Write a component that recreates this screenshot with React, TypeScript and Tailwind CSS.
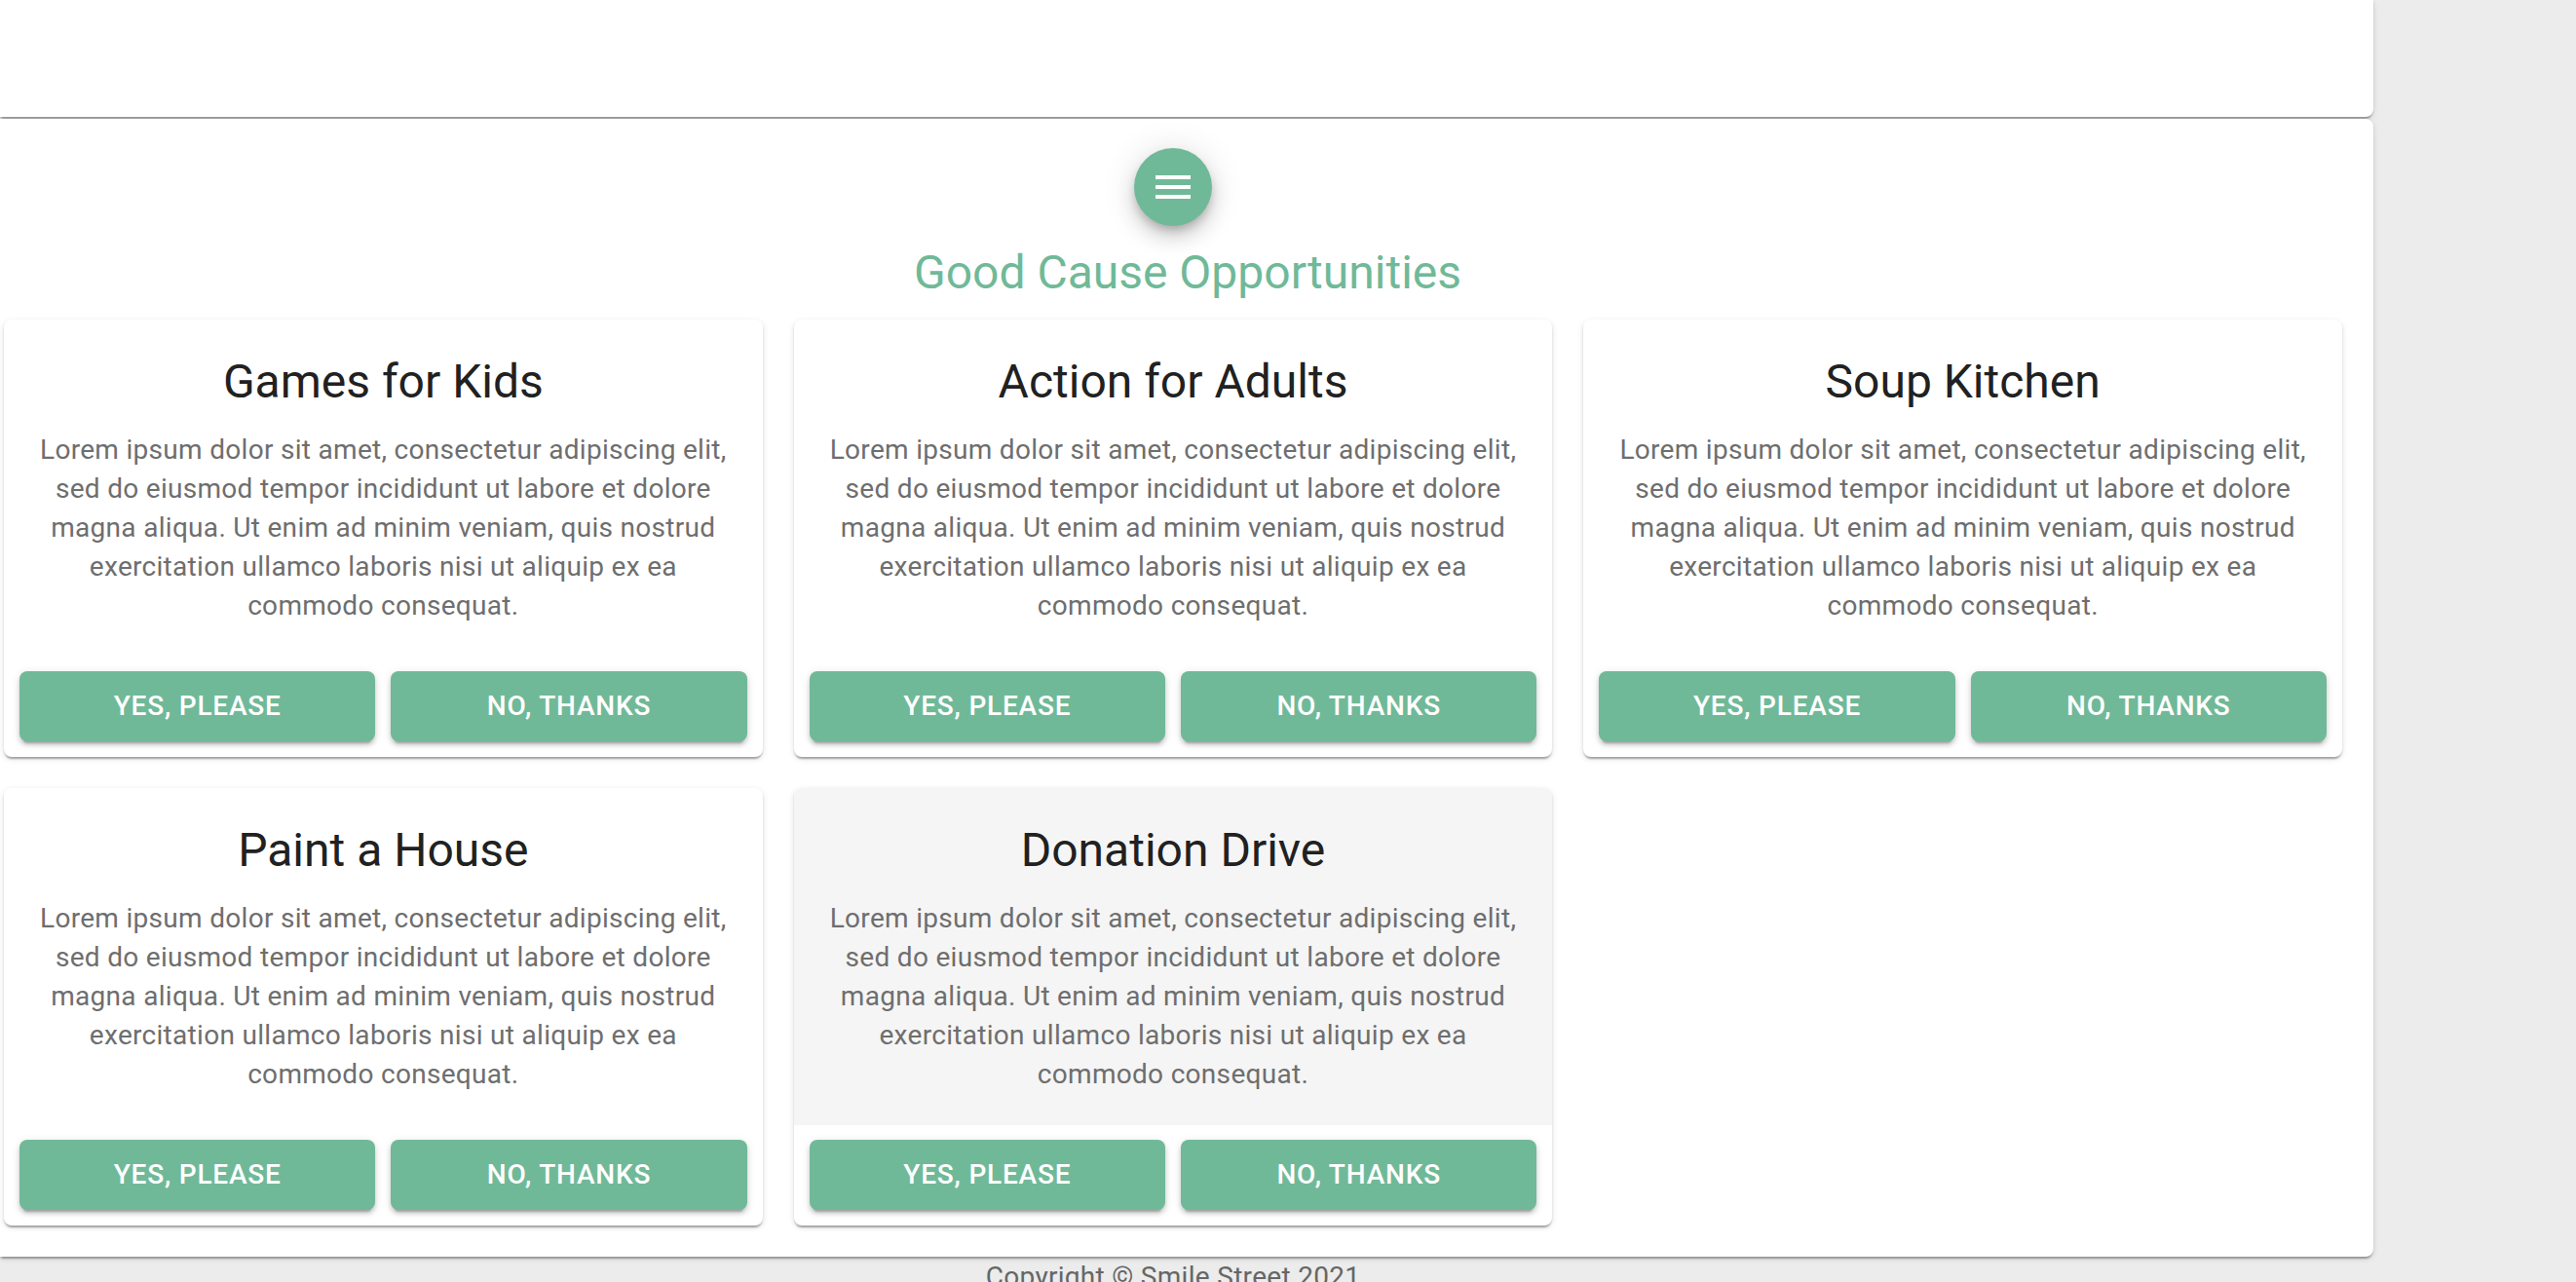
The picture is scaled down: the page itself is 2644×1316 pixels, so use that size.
const causes = [
  { title: "Games for Kids" },
  { title: "Action for Adults" },
  { title: "Soup Kitchen" },
  { title: "Paint a House" },
  { title: "Donation Drive", hovered: true },
];

const lorem =
  "Lorem ipsum dolor sit amet, consectetur adipiscing elit, sed do eiusmod tempor incididunt ut labore et dolore magna aliqua. Ut enim ad minim veniam, quis nostrud exercitation ullamco laboris nisi ut aliquip ex ea commodo consequat.";

const paperShadow =
  "shadow-[0_4px_2px_-2px_rgba(0,0,0,0.2),0_2px_2px_0_rgba(0,0,0,0.14),0_2px_6px_0_rgba(0,0,0,0.12)]";

const MenuIcon = () => (
  <svg viewBox="0 0 24 24" className="h-[48px] w-[48px] fill-white">
    <path d="M3 18h18v-2H3v2zm0-5h18v-2H3v2zm0-7v2h18V6H3z" />
  </svg>
);

const ActionButton = ({ label }: { label: string }) => (
  <button className="h-[72px] flex-1 rounded-[8px] bg-[#70b998] text-[28px] font-medium uppercase tracking-[0.8px] text-white shadow-[0_6px_2px_-4px_rgba(0,0,0,0.2),0_4px_4px_0_rgba(0,0,0,0.14),0_2px_10px_0_rgba(0,0,0,0.12)]">
    {label}
  </button>
);

const CauseCard = ({ title, hovered }: { title: string; hovered?: boolean }) => (
  <div className={`flex flex-col overflow-hidden rounded-[8px] bg-white ${paperShadow}`}>
    <div className={`px-[32px] pb-[32px] pt-[32px] text-center ${hovered ? "bg-[#f5f5f5]" : ""}`}>
      <h3 className="mb-[17px] text-[48px] leading-[64px] text-[#212121]">{title}</h3>
      <p className="pt-[1px] text-[28px] leading-[40px] tracking-[0.3px] text-[#6e6e6e]">{lorem}</p>
    </div>
    <div className="flex gap-[16px] p-[16px] pt-[15px]">
      <ActionButton label="Yes, please" />
      <ActionButton label="No, thanks" />
    </div>
  </div>
);

export default function App() {
  return (
    <div className="h-[1316px] w-full overflow-hidden bg-[#ebeceb] font-['Roboto',sans-serif]">
      <div className={`h-[120px] w-[2436px] rounded-br-[8px] bg-white ${paperShadow}`} />

      <main className={`mt-[2px] w-[2436px] rounded-r-[8px] bg-white pb-[32px] pl-[4px] pr-[32px] ${paperShadow}`}>
        <div className="flex justify-center pt-[30px]">
          <button className="flex h-[80px] w-[80px] items-center justify-center rounded-full bg-[#70b998] shadow-[0_6px_10px_-2px_rgba(0,0,0,0.2),0_12px_20px_0_rgba(0,0,0,0.14),0_2px_36px_0_rgba(0,0,0,0.12)]">
            <MenuIcon />
          </button>
        </div>

        <h2 className="mb-[16px] mt-[16px] pl-[30px] text-center text-[48px] leading-[64px] text-[#70b998]">
          Good Cause Opportunities
        </h2>

        <div className="grid grid-cols-3 gap-[32px]">
          {causes.map((cause) => (
            <CauseCard key={cause.title} title={cause.title} hovered={cause.hovered} />
          ))}
        </div>
      </main>

      <footer className="w-[2436px] pl-[4px] pr-[32px] text-center text-[28px] leading-[42px] tracking-[0.3px] text-[#666666]">
        Copyright © Smile Street 2021
      </footer>
    </div>
  );
}
